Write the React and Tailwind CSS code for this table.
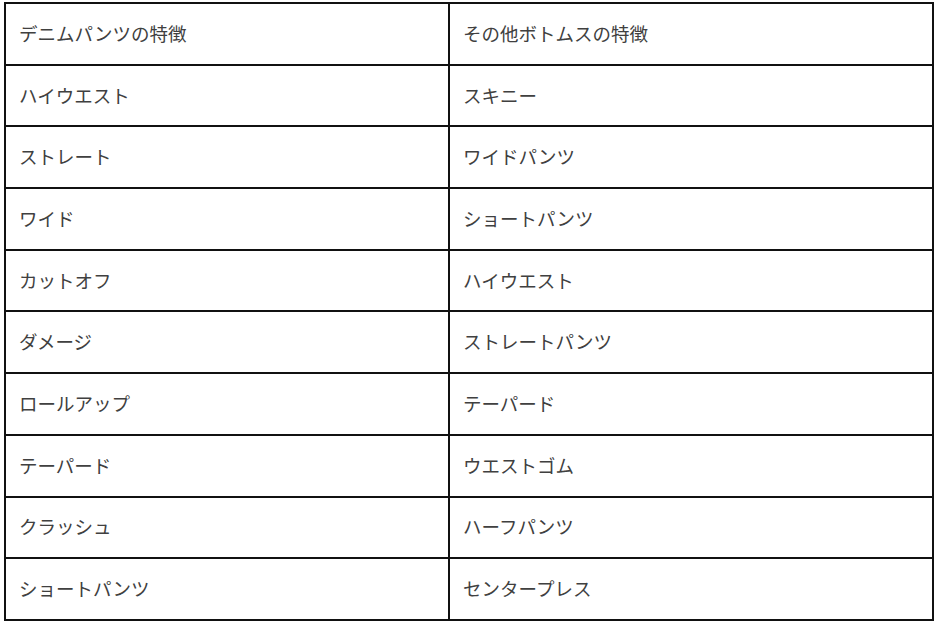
const ROWS = [
  ['デニムパンツの特徴', 'その他ボトムスの特徴'],
  ['ハイウエスト', 'スキニー'],
  ['ストレート', 'ワイドパンツ'],
  ['ワイド', 'ショートパンツ'],
  ['カットオフ', 'ハイウエスト'],
  ['ダメージ', 'ストレートパンツ'],
  ['ロールアップ', 'テーパード'],
  ['テーパード', 'ウエストゴム'],
  ['クラッシュ', 'ハーフパンツ'],
  ['ショートパンツ', 'センタープレス'],
]

export default function App() {
  return (
    <div className="h-[625px] w-[940px] bg-white pl-[4px] pt-[2px] font-['Noto_Sans_CJK_JP','Noto_Sans',sans-serif] text-[18.5px] text-[#404040]">
      <table className="w-[930px] table-fixed border-collapse border-2 border-[#111]">
        <colgroup>
          <col className="w-[444px]" />
          <col />
        </colgroup>
        <tbody>
          {ROWS.map(([left, right]) => (
            <tr key={left + right} className="h-[61.7px]">
              <td className="border-2 border-[#111] px-[13px] align-middle">{left}</td>
              <td className="border-2 border-[#111] px-[13px] align-middle">{right}</td>
            </tr>
          ))}
        </tbody>
      </table>
    </div>
  )
}
